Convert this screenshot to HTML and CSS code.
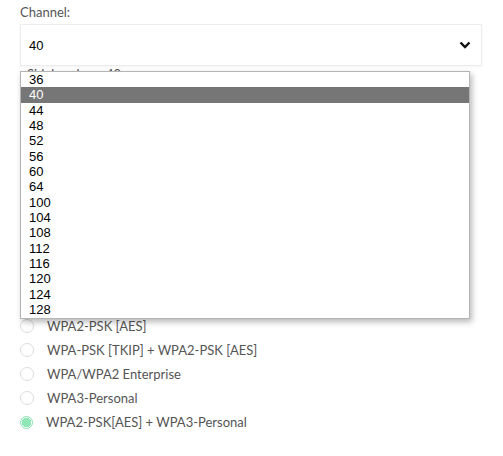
FILE: index.html
```html
<!DOCTYPE html>
<html>
<head>
    <meta charset="UTF-8">
    <title>Wireless Settings</title>
    <link rel="stylesheet" href="styles.css">
</head>
<body>
    <div class="form">
        <div class="field">
            <label class="field-label">Channel:</label>
            <div class="select-box">
                <span class="select-value">40</span>
                <svg class="chevron" width="12" height="8" viewBox="0 0 12 8">
                    <polyline points="1.5,1.5 6,6 10.5,1.5" fill="none" stroke="#111" stroke-width="2.4"/>
                </svg>
            </div>
            <div class="field-note">Sideband:&nbsp;&nbsp;&nbsp;&nbsp;&nbsp;&nbsp;&nbsp;40</div>

            <ul class="dropdown">
                <li>36</li>
                <li class="selected">40</li>
                <li>44</li>
                <li>48</li>
                <li>52</li>
                <li>56</li>
                <li>60</li>
                <li>64</li>
                <li>100</li>
                <li>104</li>
                <li>108</li>
                <li>112</li>
                <li>116</li>
                <li>120</li>
                <li>124</li>
                <li>128</li>
            </ul>
        </div>

        <div class="security">
            <div class="field-label">Security Options:</div>
            <label class="radio"><span class="radio-dot"></span>None</label>
            <label class="radio"><span class="radio-dot"></span>WEP</label>
            <label class="radio"><span class="radio-dot"></span>WPA-PSK [TKIP]</label>
            <label class="radio"><span class="radio-dot"></span>WPA2-PSK [AES]</label>
            <label class="radio"><span class="radio-dot"></span>WPA-PSK [TKIP] + WPA2-PSK [AES]</label>
            <label class="radio"><span class="radio-dot"></span>WPA/WPA2 Enterprise</label>
            <label class="radio"><span class="radio-dot"></span>WPA3-Personal</label>
            <label class="radio"><span class="radio-dot checked"></span>WPA2-PSK[AES] + WPA3-Personal</label>
        </div>
    </div>
</body>
</html>
```

FILE: styles.css
```css
body {
    margin: 0;
    background: #fff;
    font-family: Lato, "Open Sans", sans-serif;
    color: #555;
}
.form {
    padding: 0 35px 0 20px;
}
.field {
    position: relative;
}
.field-label {
    display: block;
    font-size: 13px;
    line-height: 24px;
    height: 24px;
}
.select-box {
    display: flex;
    align-items: center;
    justify-content: space-between;
    height: 40px;
    width: 446px;
    padding: 0 6px 0 8px;
    box-sizing: content-box;
    border: 1px solid #ececec;
    box-shadow: 0 1px 2px rgba(0, 0, 0, 0.05);
    background: #fff;
}
.select-value {
    font-family: "Liberation Sans", Arial, sans-serif;
    font-size: 13px;
    color: #000;
}
.chevron {
    margin-right: 4px;
}
.field-note {
    font-size: 13px;
    line-height: 16px;
    padding-left: 7px;
}
.dropdown {
    position: absolute;
    top: 71px;
    left: 0;
    width: 448px;
    margin: 0;
    padding: 0;
    list-style: none;
    background: #fff;
    border: 1px solid #b4b4b4;
    box-shadow: 2px 3px 6px rgba(0, 0, 0, 0.28);
    font-family: "Liberation Sans", Arial, sans-serif;
    font-size: 13px;
    color: #000;
    z-index: 2;
}
.dropdown li {
    height: 15.35px;
    line-height: 15.35px;
    padding-left: 8px;
}
.dropdown .selected {
    background: #767676;
    color: #fff;
}
.security {
    margin-top: 136px;
}
.radio {
    display: flex;
    align-items: center;
    gap: 13px;
    height: 24px;
    font-size: 13px;
    color: #555;
}
.radio-dot {
    width: 12px;
    height: 12px;
    border: 1px solid #dcdcdc;
    border-radius: 50%;
    background: #fff;
}
.radio-dot.checked {
    border: 1.5px solid #86e2b0;
    width: 11px;
    height: 11px;
    background: radial-gradient(circle, #8fe6b6 0, #8fe6b6 4.5px, #fff 5px);
}
```
